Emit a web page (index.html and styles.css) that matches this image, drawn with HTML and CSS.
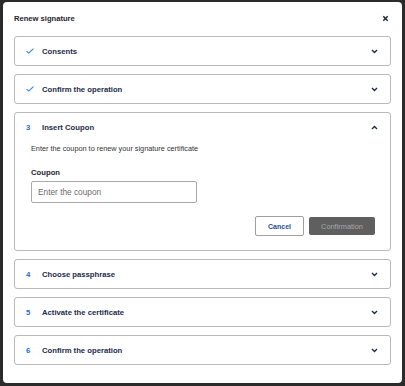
FILE: index.html
```html
<!DOCTYPE html>
<html lang="en">
<head>
    <meta charset="UTF-8">
    <meta name="viewport" content="width=device-width, initial-scale=1.0">
    <title>Renew signature</title>
    <link rel="stylesheet" href="styles.css">
</head>
<body>
    <div class="dialog">
        <div class="dialog-header">
            <span class="dialog-title">Renew signature</span>
            <svg class="close" width="7" height="7" viewBox="0 0 7 7">
                <path d="M1.3 1.3 L5.7 5.7 M5.7 1.3 L1.3 5.7" stroke="#1c2740" stroke-width="1.5" fill="none"/>
            </svg>
        </div>

        <div class="steps">
            <div class="step">
                <div class="step-head">
                    <span class="marker">
                        <svg width="8" height="6" viewBox="0 0 8 6"><path d="M0.6 3.1 L2.8 5.1 L7.4 0.6" stroke="#2f86ea" stroke-width="1.1" fill="none"/></svg>
                    </span>
                    <span class="step-label">Consents</span>
                    <svg class="chevron" width="7" height="5" viewBox="0 0 7 5"><path d="M1 1 L3.5 3.5 L6 1" stroke="#1c2b4b" stroke-width="1.4" fill="none"/></svg>
                </div>
            </div>

            <div class="step">
                <div class="step-head">
                    <span class="marker">
                        <svg width="8" height="6" viewBox="0 0 8 6"><path d="M0.6 3.1 L2.8 5.1 L7.4 0.6" stroke="#2f86ea" stroke-width="1.1" fill="none"/></svg>
                    </span>
                    <span class="step-label">Confirm the operation</span>
                    <svg class="chevron" width="7" height="5" viewBox="0 0 7 5"><path d="M1 1 L3.5 3.5 L6 1" stroke="#1c2b4b" stroke-width="1.4" fill="none"/></svg>
                </div>
            </div>

            <div class="step open">
                <div class="step-head">
                    <span class="marker num">3</span>
                    <span class="step-label">Insert Coupon</span>
                    <svg class="chevron" width="7" height="5" viewBox="0 0 7 5"><path d="M1 4 L3.5 1.5 L6 4" stroke="#1c2b4b" stroke-width="1.4" fill="none"/></svg>
                </div>
                <div class="step-body">
                    <p class="hint">Enter the coupon to renew your signature certificate</p>
                    <label class="field-label" for="coupon">Coupon</label>
                    <input class="field" id="coupon" type="text" placeholder="Enter the coupon">
                    <div class="actions">
                        <button class="btn btn-cancel">Cancel</button>
                        <button class="btn btn-confirm" disabled>Confirmation</button>
                    </div>
                </div>
            </div>

            <div class="step">
                <div class="step-head">
                    <span class="marker num">4</span>
                    <span class="step-label">Choose passphrase</span>
                    <svg class="chevron" width="7" height="5" viewBox="0 0 7 5"><path d="M1 1 L3.5 3.5 L6 1" stroke="#1c2b4b" stroke-width="1.4" fill="none"/></svg>
                </div>
            </div>

            <div class="step">
                <div class="step-head">
                    <span class="marker num">5</span>
                    <span class="step-label">Activate the certificate</span>
                    <svg class="chevron" width="7" height="5" viewBox="0 0 7 5"><path d="M1 1 L3.5 3.5 L6 1" stroke="#1c2b4b" stroke-width="1.4" fill="none"/></svg>
                </div>
            </div>

            <div class="step">
                <div class="step-head">
                    <span class="marker num">6</span>
                    <span class="step-label">Confirm the operation</span>
                    <svg class="chevron" width="7" height="5" viewBox="0 0 7 5"><path d="M1 1 L3.5 3.5 L6 1" stroke="#1c2b4b" stroke-width="1.4" fill="none"/></svg>
                </div>
            </div>
        </div>
    </div>
</body>
</html>
```

FILE: styles.css
```css
body {
    margin: 0;
    height: 100vh;
    background: #2b2b2b;
    font-family: "Liberation Sans", Arial, sans-serif;
    color: #1c2b4b;
    overflow: hidden;
}

.dialog {
    margin: 2px 0 0 3px;
    width: 399px;
    height: 381px;
    box-sizing: border-box;
    padding: 0 11px;
    background: #fff;
    border-radius: 4px;
}

.dialog-header {
    height: 32px;
    display: flex;
    align-items: center;
    justify-content: space-between;
    padding-right: 2px;
}

.dialog-title {
    font-size: 7.6px;
    font-weight: bold;
    color: #1f2430;
}

.steps {
    margin-top: 2px;
    display: flex;
    flex-direction: column;
    gap: 8px;
}

.step {
    border: 1px solid #b9b9b9;
    border-radius: 3px;
}

.step-head {
    height: 28px;
    display: flex;
    align-items: center;
    padding: 0 12px 0 11px;
}

.marker {
    width: 16px;
    display: flex;
    align-items: center;
}

.marker.num {
    font-size: 7.7px;
    font-weight: bold;
    color: #1a6fd1;
}

.step-label {
    flex: 1;
    font-size: 7.7px;
    font-weight: bold;
    color: #1c2b4b;
}

.chevron {
    display: block;
}

.step-body {
    display: flex;
    flex-direction: column;
    align-items: flex-start;
    padding: 0 15px 14px 16px;
}

.hint {
    margin: 3px 0 0;
    font-size: 7.3px;
    line-height: 10px;
    color: #333;
}

.field-label {
    margin-top: 14px;
    font-size: 7.7px;
    line-height: 10px;
    font-weight: bold;
    color: #1f2430;
}

.field {
    margin-top: 3px;
    width: 166px;
    height: 22px;
    box-sizing: border-box;
    border: 1px solid #a9a9a9;
    border-radius: 2px;
    padding: 0 6px;
    font-family: inherit;
    font-size: 8.3px;
    color: #333;
    outline: none;
}

.field::placeholder {
    color: #6b6b6b;
}

.actions {
    align-self: stretch;
    margin-top: 13px;
    display: flex;
    justify-content: flex-end;
    align-items: center;
    gap: 5px;
}

.btn {
    font-family: inherit;
    border-radius: 2px;
    padding: 0;
    cursor: pointer;
}

.btn-cancel {
    width: 49px;
    height: 20px;
    background: #fff;
    border: 1px solid #9f9f9f;
    font-size: 7px;
    font-weight: bold;
    color: #1d4f91;
}

.btn-confirm {
    width: 66px;
    height: 18px;
    background: #5f5f5f;
    border: none;
    font-size: 7.4px;
    color: #a8a8a8;
}
```
